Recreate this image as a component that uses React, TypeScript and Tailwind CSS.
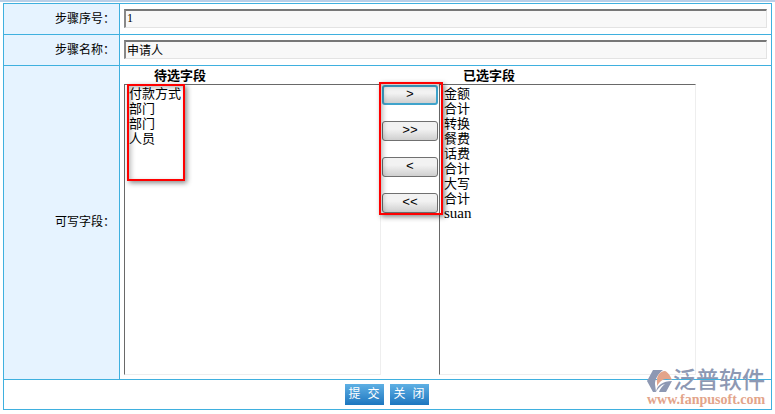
import React from 'react';

const available = ['付款方式', '部门', '部门', '人员'];
const selected = ['金额', '合计', '转换', '餐费', '话费', '合计', '大写', '合计', 'suan'];
const moves = [
  { label: '>', title: '添加' },
  { label: '>>', title: '全部添加' },
  { label: '<', title: '移除' },
  { label: '<<', title: '全部移除' },
];

const labelCell =
  "w-[116px] border border-[#3fb0df] bg-[#e6f3ff] pr-1 pb-[3px] text-right font-['Noto_Sans_CJK_SC',sans-serif] text-xs font-normal";
const inputClass =
  'block h-[19px] w-full border-t-2 border-l-2 border-r border-b border-t-[#777] border-l-[#888] border-r-[#e3e3e3] border-b-[#e3e3e3] bg-[#f8f8f8] px-px text-xs outline-none';
const listClass =
  'block h-[291px] w-full appearance-none overflow-hidden border border-t-[#696969] border-l-[#696969] border-r-[#eee] border-b-[#eee] bg-white py-0 pl-1 outline-none';
const moveClass =
  "h-5 rounded-[3px] bg-linear-to-b from-[#f2f2f2] from-40% to-[#cfcfcf] font-['Liberation_Mono',monospace] leading-4";
const actionClass =
  "h-[21px] w-[39px] bg-linear-to-b from-[#5eb0e4] to-[#1b76bf] font-['Liberation_Mono','Noto_Sans_CJK_SC',monospace] text-xs whitespace-nowrap text-white";
const markClass =
  'pointer-events-none absolute border-2 border-[#f00] shadow-[2px_2px_5px_#0007,inset_2px_2px_5px_#0004]';

const FieldList: React.FC<{ id: string; items: string[] }> = ({ id, items }) => (
  <select id={id} multiple className={listClass}>
    {items.map((item, i) => (
      <option
        key={i}
        value={i}
        className={
          /^[a-z]+$/.test(item)
            ? 'flex h-[17px] min-h-0 items-center p-0 text-[15px]'
            : 'flex h-[15px] min-h-0 items-center p-0'
        }
      >
        {item}
      </option>
    ))}
  </select>
);

const Watermark: React.FC = () => (
  <div className="pointer-events-none absolute right-1 bottom-1 w-[121px]">
    <div className="flex h-6 items-center">
      <svg className="shrink-0" width="26" height="24" viewBox="0 0 26 24" aria-hidden="true">
        <path d="M6 1h10c-5 4-8 9-8 14l1 8H6L0 12z" fill="#8d98b3" />
        <path d="M10 14C9 7 13 2 18 2c3 1 6 6 7 9-6-2-9-1-12 2-1 1-3 3-3 5z" fill="#e3a48a" />
        <path d="M9 23c1-7 7-11 16-11l-6 11h-7c1-3 3-6 6-8-4 1-7 4-9 8z" fill="#8d98b3" />
      </svg>
      <span className="text-[23px] leading-6 font-medium whitespace-nowrap text-[#8d98b3]">泛普软件</span>
    </div>
    <div className="font-['Liberation_Serif',serif] text-sm leading-[13px] font-bold text-[#e3a48a]">
      www.fanpusoft.com
    </div>
  </div>
);

export default function App() {
  return (
    <div
      lang="zh-CN"
      className="bg-white font-['Liberation_Serif','Noto_Sans_CJK_SC',serif] text-[13px] leading-[15px] text-black"
    >
      <div className="h-0.5 bg-[#b9cfe8]"></div>
      <form className="relative mx-[3px] mt-px" onSubmit={e => e.preventDefault()}>
        <table className="w-full table-fixed border-collapse">
          <tbody>
            <tr className="h-[31px]">
              <th scope="row" className={labelCell}>
                <label htmlFor="stepNo">步骤序号：</label>
              </th>
              <td className="border border-[#3fb0df] px-1 pb-0.5">
                <input id="stepNo" type="text" defaultValue="1" className={inputClass} />
              </td>
            </tr>
            <tr className="h-[31px]">
              <th scope="row" className={labelCell}>
                <label htmlFor="stepName">步骤名称：</label>
              </th>
              <td className="border border-[#3fb0df] px-1 pb-0.5">
                <input id="stepName" type="text" defaultValue="申请人" className={inputClass} />
              </td>
            </tr>
            <tr>
              <th scope="row" className={labelCell}>可写字段：</th>
              <td className="border border-[#3fb0df] px-1 pb-1">
                <div className="flex">
                  <div className="w-[257px]">
                    <label htmlFor="available" className="block h-[18px] pt-0.5 pl-[30px] font-bold">
                      待选字段
                    </label>
                    <div className="relative">
                      <FieldList id="available" items={available} />
                      <div className={`${markClass} top-0 left-[3px] h-[97px] w-[58px]`}></div>
                    </div>
                  </div>
                  <div className="relative w-[58px] pt-[19px]">
                    <div className="flex flex-col gap-4 px-px">
                      {moves.map((m, i) => (
                        <button
                          key={m.label}
                          type="button"
                          aria-label={m.title}
                          className={`${moveClass} ${i === 0 ? 'border-2 border-[#3fa3cb]' : 'border border-[#707070]'}`}
                        >
                          {m.label}
                        </button>
                      ))}
                    </div>
                    <div className={`${markClass} top-4 -right-1 -left-0.5 z-10 h-[133px]`}></div>
                  </div>
                  <div className="w-[257px]">
                    <label htmlFor="selected" className="block h-[18px] pt-0.5 pl-6 font-bold">
                      已选字段
                    </label>
                    <FieldList id="selected" items={selected} />
                  </div>
                </div>
              </td>
            </tr>
            <tr className="h-[30px]">
              <td colSpan={2} className="border border-[#3fb0df]">
                <div className="flex justify-center gap-1.5 pr-0.5">
                  <button type="submit" className={actionClass}>提 交</button>
                  <button type="button" className={actionClass}>关 闭</button>
                </div>
              </td>
            </tr>
          </tbody>
        </table>
        <Watermark />
      </form>
    </div>
  );
}
